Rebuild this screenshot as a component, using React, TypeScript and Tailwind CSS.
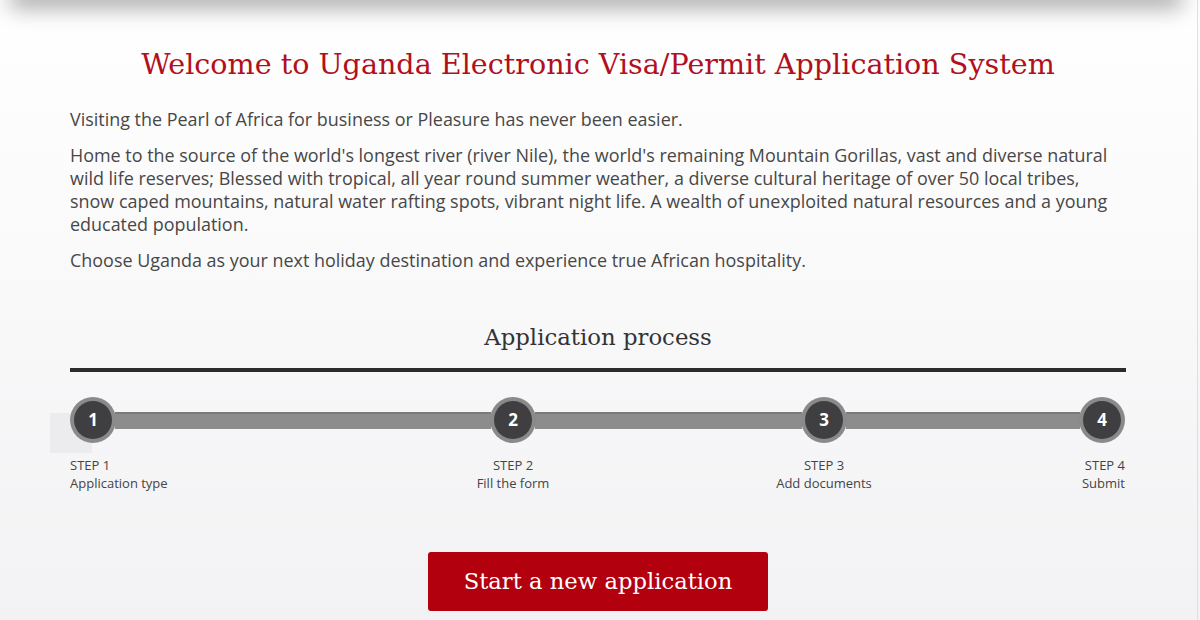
const slab = { fontFamily: '"DejaVu Serif", "Liberation Serif", serif' };

const steps = [
  { n: 1, title: "Application type", align: "items-start" },
  { n: 2, title: "Fill the form", align: "items-center" },
  { n: 3, title: "Add documents", align: "items-center" },
  { n: 4, title: "Submit", align: "items-end" },
];

const segments = ["w-[376px]", "w-[267px]", "w-[234px]"];

function StepCircle({ n }: { n: number }) {
  return (
    <div className="w-[46px] h-[46px] rounded-full bg-[#8a8a8a] p-[4px] relative z-10">
      <div className="w-full h-full rounded-full bg-[#3f3f42] flex items-center justify-center text-white font-bold text-[17px]">
        {n}
      </div>
    </div>
  );
}

export default function App() {
  return (
    <div
      className="relative w-[1200px] h-[620px] overflow-hidden bg-gradient-to-b from-white to-[#f2f2f4] text-[#474747]"
      style={{ fontFamily: '"Open Sans", "Noto Sans", sans-serif' }}
    >
      {/* header shadow from above the fold */}
      <div className="absolute left-[18px] right-[26px] -top-[6px] h-[6px] bg-[#999] shadow-[0_0_22px_8px_rgba(0,0,0,0.35)]" />
      <div className="absolute right-[2px] top-0 bottom-0 w-px bg-[#dedede]" />

      <div className="w-[1056px] ml-[70px] pt-[44px]">
        <h1 className="text-center text-[#b1101c] text-[28.6px] leading-[40px]" style={slab}>
          Welcome to Uganda Electronic Visa/Permit Application System
        </h1>

        <div className="mt-[24px] text-[17.95px] leading-[23px] space-y-[13px]">
          <p>Visiting the Pearl of Africa for business or Pleasure has never been easier.</p>
          <p>
            Home to the source of the world's longest river (river Nile), the world's remaining Mountain Gorillas,
            vast and diverse natural wild life reserves; Blessed with tropical, all year round summer weather, a
            diverse cultural heritage of over 50 local tribes, snow caped mountains, natural water rafting spots,
            vibrant night life. A wealth of unexploited natural resources and a young educated population.
          </p>
          <p>Choose Uganda as your next holiday destination and experience true African hospitality.</p>
        </div>

        <h2 className="mt-[50px] text-center text-[22.8px] leading-[30px] text-[#333]" style={slab}>
          Application process
        </h2>
        <div className="mt-[16px] h-[4px] bg-[#2b2b2b]" />

        <div className="relative mt-[25px] flex items-start">
          <div className="absolute left-[-20px] top-[16px] w-[42px] h-[40px] bg-[#ececee]" />
          {steps.map((s, i) => (
            <div key={s.n} className="flex items-start">
              <div className={`flex flex-col w-[46px] ${s.align}`}>
                <StepCircle n={s.n} />
                <div
                  className={`mt-[13px] whitespace-nowrap text-[13px] leading-[18px] text-[#444] flex flex-col ${s.align}`}
                >
                  <span>STEP {s.n}</span>
                  <span>{s.title}</span>
                </div>
              </div>
              {i < 3 && (
                <div
                  className={`${segments[i]} h-[17px] mt-[15px] -mx-[1px] bg-[#8c8c8c] border-t-2 border-[#7a7a7a]`}
                />
              )}
            </div>
          ))}
        </div>

        <div className="mt-[60px] flex justify-center">
          <button
            className="w-[340px] h-[59px] rounded-[3px] bg-[#b3000f] text-white text-[22.7px]"
            style={slab}
          >
            Start a new application
          </button>
        </div>
      </div>
    </div>
  );
}
